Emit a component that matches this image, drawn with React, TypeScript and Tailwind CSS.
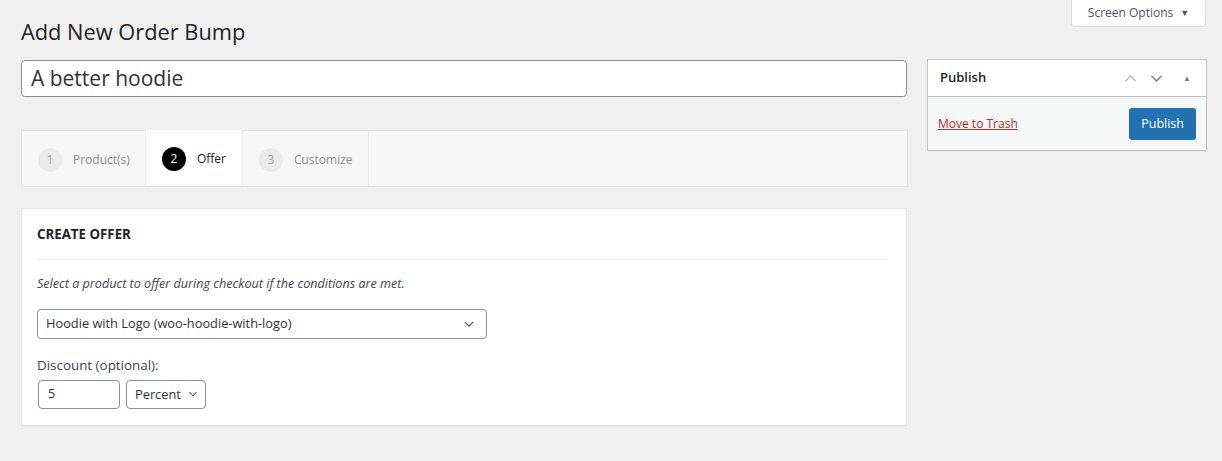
import React from 'react';

const font = { fontFamily: '"Open Sans", "Noto Sans", Arial, sans-serif' };

const Chevron: React.FC<{ dir: 'up' | 'down'; className?: string; width?: number }> = ({ dir, className, width = 2 }) => (
  <svg viewBox="0 0 20 20" className={className} fill="none" stroke="currentColor" strokeWidth={width}>
    {dir === 'up' ? <path d="M4 13l6-6 6 6" /> : <path d="M4 7l6 6 6-6" />}
  </svg>
);

const Step: React.FC<{ n: number; label: string; active?: boolean }> = ({ n, label, active }) => (
  <div
    className={
      'flex items-center gap-[11px] h-full border-r border-[#ececec] pt-[2px] ' +
      (active ? 'bg-white px-[16px] -mt-px h-[57px]' : 'pl-[16px] pr-[15px]')
    }
  >
    <span
      className={
        'w-[24px] h-[24px] rounded-full flex items-center justify-center text-[12px] ' +
        (active ? 'bg-black text-white' : 'bg-[#ebebeb] text-[#a0a0a0]')
      }
    >
      {n}
    </span>
    <span className={'text-[12px] ' + (active ? 'text-[#1d2327]' : 'text-[#8a8a8a]')}>{label}</span>
  </div>
);

export default function App() {
  return (
    <div className="w-[1222px] h-[461px] bg-[#f0f0f1] text-[#3c434a] relative overflow-hidden" style={font}>
      {/* screen options tab */}
      <div className="absolute right-[16px] top-0 w-[135px] h-[27px] bg-white border border-t-0 border-[#dcdcde] rounded-b-[4px] flex items-center justify-center gap-[7px] text-[12px] text-[#50575e]">
        <span>Screen Options</span>
        <span className="text-[9px]">▼</span>
      </div>

      <div className="pt-[18px] pl-[21px] flex gap-[20px]">
        <div className="w-[886px]">
          <h1 className="text-[21.8px] leading-[28px] text-[#1d2327] h-[42px]">Add New Order Bump</h1>
          <div className="h-[37px] bg-white border border-[#8c8f94] rounded-[4px] flex items-center px-[9px] text-[21px] text-[#2c3338]">
            A better hoodie
          </div>

          {/* steps */}
          <div className="mt-[33px] -mr-px h-[57px] bg-[#f7f7f7] border border-[#e5e5e5] flex items-stretch">
            <Step n={1} label="Product(s)" />
            <Step n={2} label="Offer" active />
            <Step n={3} label="Customize" />
          </div>

          {/* offer card */}
          <div className="mt-[21px] bg-white border border-[#e3e3e3] shadow-[0_1px_1px_rgba(0,0,0,0.04)] pl-[15px] pr-[16px] pt-[16px] h-[218px]">
            <div className="text-[13.3px] font-bold text-[#1d2327]">CREATE OFFER</div>
            <div className="mt-[14px] mr-[2px] border-t border-[#eeeeee]" />
            <p className="mt-[15px] text-[12.6px] italic text-[#3c434a]">
              Select a product to offer during checkout if the conditions are met.
            </p>
            <div className="mt-[15px] w-[450px] h-[30px] border border-[#8c8f94] rounded-[4px] flex items-center justify-between pl-[8px] pr-[10px] text-[12.8px] text-[#2c3338]">
              <span>Hoodie with Logo (woo-hoodie-with-logo)</span>
              <Chevron dir="down" width={1.8} className="w-[14px] h-[14px] text-[#50575e]" />
            </div>
            <div className="mt-[16px] text-[13.4px] text-[#3c434a]">Discount (optional):</div>
            <div className="mt-[5px] flex gap-[6px]">
              <div className="w-[82px] h-[29px] border border-[#8c8f94] rounded-[4px] flex items-center px-[9px] text-[12.5px] text-[#2c3338] ml-px">
                5
              </div>
              <div className="w-[80px] h-[29px] border border-[#8c8f94] rounded-[4px] flex items-center gap-[6px] pl-[8px] text-[12.8px] text-[#2c3338]">
                <span>Percent</span>
                <Chevron dir="down" width={1.8} className="w-[12px] h-[12px] text-[#50575e]" />
              </div>
            </div>
          </div>
        </div>

        {/* publish box */}
        <div className="w-[280px] mt-[41px] self-start bg-white border border-[#c3c4c7] shadow-[0_1px_1px_rgba(0,0,0,0.04)]">
          <div className="h-[37px] border-b border-[#c3c4c7] flex items-center pl-[12px] pr-[15px]">
            <span className="text-[13px] font-semibold text-[#1d2327]">Publish</span>
            <div className="ml-auto flex items-center">
              <Chevron dir="up" className="w-[17px] h-[17px] text-[#c3c4c7]" />
              <Chevron dir="down" className="w-[17px] h-[17px] ml-[9px] text-[#8c8f94]" />
              <span className="ml-[18px] text-[8px] text-[#787c82]">▲</span>
            </div>
          </div>
          <div className="h-[53px] bg-[#f6f7f7] flex items-center pl-[10px] pr-[10px] pt-[1px]">
            <a className="text-[12px] text-[#b32d2e] underline">Move to Trash</a>
            <button className="ml-auto h-[32px] px-[12px] bg-[#2271b1] text-white text-[12.5px] rounded-[3px]">
              Publish
            </button>
          </div>
        </div>
      </div>
    </div>
  );
}
